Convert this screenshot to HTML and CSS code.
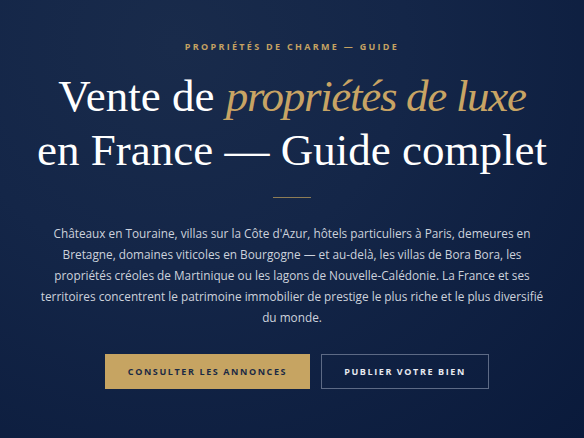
FILE: index.html
```html
<!DOCTYPE html>
<html lang="fr">
<head>
<meta charset="utf-8">
<link rel="stylesheet" href="styles.css">
</head>
<body>
<section class="hero">
  <p class="eyebrow">Propriétés de charme — Guide</p>
  <h1 class="title">Vente de <em>propriétés de luxe</em><br>en France — Guide complet</h1>
  <div class="rule"></div>
  <p class="lead">Châteaux en Touraine, villas sur la Côte d'Azur, hôtels particuliers à Paris, demeures en Bretagne, domaines viticoles en Bourgogne — et au-delà, les villas de Bora Bora, les propriétés créoles de Martinique ou les lagons de Nouvelle-Calédonie. La France et ses territoires concentrent le patrimoine immobilier de prestige le plus riche et le plus diversifié du monde.</p>
  <div class="actions">
    <a class="btn btn-gold" href="#">Consulter les annonces</a>
    <a class="btn btn-outline" href="#">Publier votre bien</a>
  </div>
</section>
</body>
</html>
```
FILE: styles.css
```css
html, body {
  margin: 0;
  padding: 0;
  height: 100%;
}
body {
  background: radial-gradient(ellipse at 30% 10%, #192b4b 0%, #142648 40%, #0a1a3b 100%);
  font-family: "Open Sans", "Liberation Sans", sans-serif;
  color: #fff;
  overflow: hidden;
}
.hero {
  display: flex;
  flex-direction: column;
  align-items: center;
  text-align: center;
  padding-top: 41px;
}
.eyebrow {
  margin: 0;
  font-size: 9px;
  font-weight: 700;
  letter-spacing: 2.3px;
  text-transform: uppercase;
  color: #c5a262;
  line-height: 12px;
}
.title {
  margin: 16px 0 0;
  font-family: "Liberation Serif", serif;
  font-weight: 400;
  font-size: 45px;
  line-height: 54px;
  color: #fff;
}
.title em {
  color: #c8a464;
  font-style: italic;
  letter-spacing: -1.3px;
}
.rule {
  width: 38px;
  height: 1px;
  background: #8e7d55;
  margin-top: 20px;
}
.lead {
  margin: 25px 0 0;
  width: 515px;
  font-size: 11.8px;
  line-height: 21px;
  color: #cdd2dc;
}
.actions {
  display: flex;
  gap: 11px;
  margin-top: 26px;
  padding-left: 10px;
}
.btn {
  display: flex;
  align-items: center;
  justify-content: center;
  height: 35px;
  box-sizing: border-box;
  font-size: 9px;
  font-weight: 700;
  letter-spacing: 1.6px;
  text-transform: uppercase;
  text-decoration: none;
}
.btn-gold {
  width: 205px;
  background: #c6a462;
  color: #1b2a44;
}
.btn-outline {
  width: 168px;
  border: 1px solid #5d6a85;
  color: #e8eaf0;
}
```
